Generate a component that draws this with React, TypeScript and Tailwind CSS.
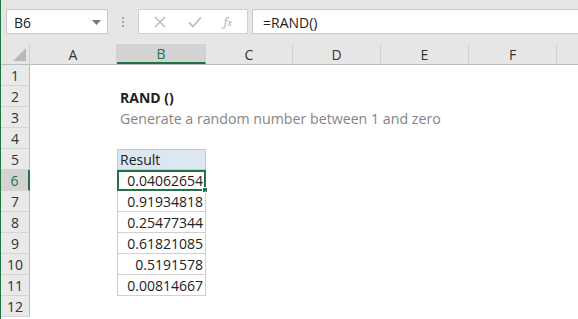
import React from "react";

const COLS = [
  { key: "A", w: 87 },
  { key: "B", w: 89 },
  { key: "C", w: 87 },
  { key: "D", w: 88 },
  { key: "E", w: 88 },
  { key: "F", w: 88 },
  { key: "", w: 88 },
];

const VALUES = [
  "0.04062654",
  "0.91934818",
  "0.25477344",
  "0.61821085",
  "0.5191578",
  "0.00814667",
];

const font = { fontFamily: '"Open Sans", "Liberation Sans", sans-serif' };

const RowHead = ({ n, active }: { n: number; active?: boolean }) => (
  <div
    className={`w-[29px] shrink-0 h-full flex items-center justify-center border-b border-[#d4d4d4] text-[14px] ${
      active
        ? "bg-[#d3d3d3] text-[#217346] border-r-2 border-r-[#217346]"
        : "bg-[#e9e9e9] text-[#333] border-r border-r-[#bdbdbd]"
    }`}
  >
    {n}
  </div>
);

const Cell = ({ w, children, className = "" }: { w: number; children?: React.ReactNode; className?: string }) => (
  <div style={{ width: w }} className={`shrink-0 h-full relative ${className}`}>
    {children}
  </div>
);

export default function App() {
  const rows = Array.from({ length: 12 }, (_, i) => i + 1);
  return (
    <div style={font} className="w-[578px] h-[319px] overflow-hidden bg-white border-l border-[#217346] text-[#222]">
      {/* formula bar */}
      <div className="h-[44px] bg-[#e6e6e6] flex items-start pt-[9px] pl-[5px]">
        <div className="w-[102px] h-[25px] bg-white border border-[#c8c8c8] flex items-center justify-between pl-[7px] pr-[6px] text-[14px] pt-[2px]">
          <span>B6</span>
          <svg width="9" height="5" viewBox="0 0 9 5">
            <path d="M0 0h9L4.5 5z" fill="#777" />
          </svg>
        </div>
        <div className="w-[30px] h-[25px] flex flex-col items-center justify-center gap-[2px]">
          <span className="w-[2px] h-[2px] bg-[#a8a8a8]" />
          <span className="w-[2px] h-[2px] bg-[#a8a8a8]" />
          <span className="w-[2px] h-[2px] bg-[#a8a8a8]" />
        </div>
        <div className="w-[110px] h-[25px] bg-white border border-[#d0d0d0] flex items-center justify-around px-[4px]">
          <svg width="12" height="12" viewBox="0 0 12 12">
            <path d="M1 1l10 10M11 1L1 11" stroke="#bdbdbd" strokeWidth="1.6" />
          </svg>
          <svg width="14" height="12" viewBox="0 0 14 12">
            <path d="M1 6.5l4 4L13 1.5" stroke="#bdbdbd" strokeWidth="1.8" fill="none" />
          </svg>
          <span className="italic text-[13px] text-[#b5b5b5] font-serif">
            f<span className="text-[10px]">x</span>
          </span>
        </div>
        <div className="ml-[4px] flex-1 h-[25px] bg-white border border-[#c8c8c8] border-r-0 flex items-center pl-[10px] text-[14px] pt-[2px]">
          =RAND()
        </div>
      </div>

      {/* column headers */}
      <div className="h-[21px] flex bg-[#e6e6e6] border-b border-[#bcbcbc]">
        <div className="w-[29px] shrink-0 relative border-r border-[#d0d0d0]">
          <svg className="absolute right-[3px] bottom-[3px]" width="13" height="13" viewBox="0 0 13 13">
            <path d="M13 0v13H0z" fill="#b9b9b9" />
          </svg>
        </div>
        {COLS.map((c, i) => (
          <div
            key={i}
            style={{ width: c.w }}
            className={`shrink-0 flex items-center justify-center text-[14px] border-r border-[#d0d0d0] ${
              c.key === "B" ? "bg-[#d3d3d3] text-[#217346] border-b-2 border-b-[#217346]" : "text-[#333]"
            }`}
          >
            {c.key}
          </div>
        ))}
      </div>

      {/* rows */}
      {rows.map((n) => {
        const vi = n - 6;
        return (
          <div key={n} className="h-[21px] flex">
            <RowHead n={n} active={n === 6} />
            <Cell w={87} />
            {n === 2 ? (
              <Cell w={89}>
                <span className="absolute left-[3px] top-[1px] whitespace-nowrap font-bold text-[14px] text-[#222]">
                  RAND ()
                </span>
              </Cell>
            ) : n === 3 ? (
              <Cell w={89}>
                <span className="absolute left-[3px] top-[1px] whitespace-nowrap text-[14.2px] text-[#858585]">
                  Generate a random number between 1 and zero
                </span>
              </Cell>
            ) : n === 5 ? (
              <Cell w={89} className="bg-[#dde7f1] border border-[#bfc9d6] border-b-[#c9c9c9] flex items-center pl-[2px] text-[14px]">
                Result
              </Cell>
            ) : vi >= 0 && vi < VALUES.length ? (
              <Cell
                w={89}
                className={`flex items-center justify-end text-[14px] ${
                  n === 6
                    ? "border-2 border-[#217346] pr-[1px]"
                    : "border-x border-b border-[#d0d0d0] pr-[2px]"
                }`}
              >
                {VALUES[vi]}
                {n === 6 && (
                  <span className="absolute -right-[4px] -bottom-[4px] w-[6px] h-[6px] bg-[#217346] border border-white" />
                )}
              </Cell>
            ) : (
              <Cell w={89} />
            )}
            <Cell w={87} />
          </div>
        );
      })}
    </div>
  );
}
